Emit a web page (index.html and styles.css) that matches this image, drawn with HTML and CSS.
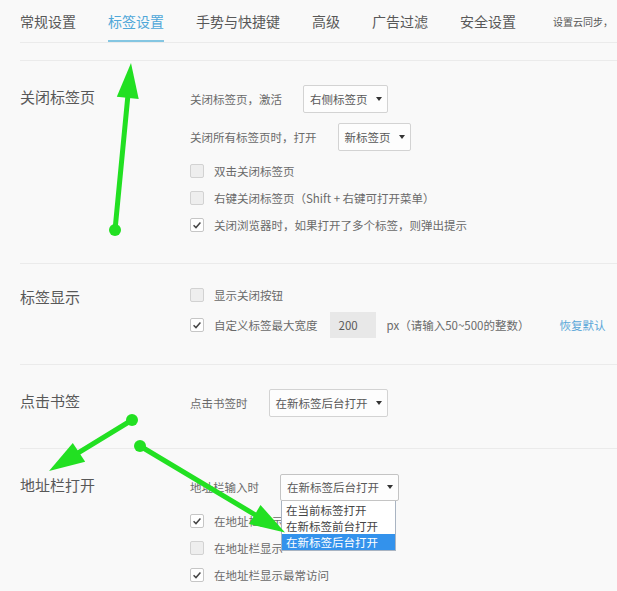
FILE: index.html
```html
<!DOCTYPE html>
<html lang="zh-CN">
<head>
<meta charset="utf-8">
<title>标签设置</title>
<link rel="stylesheet" href="styles.css">
</head>
<body>
<div class="page">
  <nav class="nav">
    <span class="tab">常规设置</span>
    <span class="tab active">标签设置</span>
    <span class="tab">手势与快捷键</span>
    <span class="tab">高级</span>
    <span class="tab">广告过滤</span>
    <span class="tab">安全设置</span>
    <span class="tab small">设置云同步，</span>
  </nav>

  <section class="section">
    <h2 class="title">关闭标签页</h2>
    <div class="rows">
      <div class="row sel-row"><span class="label">关闭标签页，激活</span><span class="select">右侧标签页<i class="caret"></i></span></div>
      <div class="row sel-row"><span class="label">关闭所有标签页时，打开</span><span class="select">新标签页<i class="caret"></i></span></div>
      <div class="row cb-row"><span class="cb"></span>双击关闭标签页</div>
      <div class="row cb-row"><span class="cb"></span>右键关闭标签页（Shift + 右键可打开菜单）</div>
      <div class="row cb-row"><span class="cb checked"><svg viewBox="0 0 14 14"><polyline points="3,7.2 5.8,10 11,4"/></svg></span>关闭浏览器时，如果打开了多个标签，则弹出提示</div>
    </div>
  </section>

  <section class="section compact">
    <h2 class="title">标签显示</h2>
    <div class="rows">
      <div class="row cb-row"><span class="cb"></span>显示关闭按钮</div>
      <div class="row input-row"><span class="cb checked"><svg viewBox="0 0 14 14"><polyline points="3,7.2 5.8,10 11,4"/></svg></span>自定义标签最大宽度<span class="num">200</span><span class="unit">px（请输入50~500的整数）</span><span class="link">恢复默认</span></div>
    </div>
  </section>

  <section class="section">
    <h2 class="title">点击书签</h2>
    <div class="rows">
      <div class="row sel-row"><span class="label">点击书签时</span><span class="select">在新标签后台打开<i class="caret"></i></span></div>
    </div>
  </section>

  <section class="section last">
    <h2 class="title">地址栏打开</h2>
    <div class="rows">
      <div class="row sel-row"><span class="label">地址栏输入时</span>
        <span class="select-wrap">
          <span class="select open">在新标签后台打开<i class="caret"></i></span>
          <span class="menu">
            <span class="opt">在当前标签打开</span>
            <span class="opt">在新标签前台打开</span>
            <span class="opt hl">在新标签后台打开</span>
          </span>
        </span>
      </div>
      <div class="row cb-row"><span class="cb checked"><svg viewBox="0 0 14 14"><polyline points="3,7.2 5.8,10 11,4"/></svg></span>在地址栏显示</div>
      <div class="row cb-row"><span class="cb"></span>在地址栏显示</div>
      <div class="row cb-row"><span class="cb checked"><svg viewBox="0 0 14 14"><polyline points="3,7.2 5.8,10 11,4"/></svg></span>在地址栏显示最常访问</div>
    </div>
  </section>
</div>

<svg class="annot" viewBox="0 0 617 591" width="617" height="591">
  <g class="arrow">
    <line x1="115" y1="230" x2="127.7" y2="97.8"/>
    <circle cx="115" cy="230" r="6"/>
    <polygon points="131,63 138.7,98.9 116.8,96.8"/>
  </g>
  <g class="arrow">
    <line x1="132" y1="420" x2="79" y2="452.3"/>
    <circle cx="132" cy="420" r="6"/>
    <polygon points="49,471 85.2,461.7 72.8,442.9"/>
  </g>
  <g class="arrow">
    <line x1="140" y1="446" x2="254.8" y2="514.6"/>
    <circle cx="140" cy="446" r="6"/>
    <polygon points="285,532.5 249.1,524.1 260.5,505"/>
  </g>
</svg>
</body>
</html>
```

FILE: styles.css
```css
html, body {
  margin: 0;
  padding: 0;
  height: 100%;
  overflow: hidden;
}

body {
  position: relative;
  background: #f9f9f9;
  font-family: "Noto Sans CJK SC", "Noto Sans", sans-serif;
  color: #6a6a6a;
}

.page {
  margin-left: 20px;
}

/* top tabs */
.nav {
  display: flex;
  align-items: stretch;
  gap: 32px;
  height: 42px;
  border-bottom: 1px solid #ebebeb;
  margin-bottom: 17px;
  overflow: hidden;
}

.tab {
  display: flex;
  align-items: center;
  font-size: 14px;
  color: #585858;
  white-space: nowrap;
}

.tab.active {
  color: #4fa7d8;
  box-shadow: inset 0 -2px 0 #84c6e2;
}

.tab.small {
  font-size: 10px;
  margin-left: 5px;
}

/* sections */
.section {
  display: flex;
  align-items: flex-start;
  border-top: 1px solid #ebebeb;
  padding: 24px 0 29px;
}

.section.compact {
  padding: 21px 0 26px;
}

.section.last {
  padding-bottom: 0;
}

.title {
  flex: 0 0 170px;
  margin: 0;
  font-size: 15px;
  font-weight: normal;
  line-height: 24px;
  color: #585858;
}

.rows {
  display: flex;
  flex-direction: column;
  gap: 8px;
  font-size: 11.5px;
}

.row {
  display: flex;
  align-items: center;
  white-space: nowrap;
}

.sel-row {
  height: 28px;
  margin-bottom: 2px;
}

.cb-row {
  height: 19px;
}

.input-row {
  height: 26px;
}

.label {
  margin-right: 21px;
}

/* select */
.select {
  box-sizing: border-box;
  display: inline-flex;
  align-items: center;
  gap: 8px;
  height: 28px;
  padding: 0 5px 0 6px;
  background: #fdfdfd;
  border: 1px solid #d3d3d3;
  border-radius: 2px;
  color: #585858;
}

.select.open {
  height: 27px;
  border-color: #c4c4c4;
}

.caret {
  width: 0;
  height: 0;
  border-left: 3.5px solid transparent;
  border-right: 3.5px solid transparent;
  border-top: 4px solid #333;
}

.select-wrap {
  position: relative;
  display: inline-flex;
}

.menu {
  position: absolute;
  top: 100%;
  left: 1px;
  width: 115px;
  box-sizing: border-box;
  display: flex;
  flex-direction: column;
  padding-top: 1px;
  background: #fff;
  border: 1px solid #a9b4c2;
  border-top: none;
  z-index: 2;
}

.opt {
  height: 16px;
  line-height: 16px;
  padding-left: 4px;
  color: #444;
}

.opt.hl {
  background: #3392ec;
  color: #fff;
}

/* checkbox */
.cb {
  box-sizing: border-box;
  width: 14px;
  height: 14px;
  margin-right: 10px;
  border: 1px solid #d2d2d2;
  border-radius: 2px;
  background: #eeeeee;
  display: inline-flex;
}

.cb.checked {
  background: #fff;
  border-color: #c6c6c6;
}

.cb svg {
  width: 12px;
  height: 12px;
}

.cb polyline {
  fill: none;
  stroke: #444;
  stroke-width: 1.7;
}

/* width input */
.num {
  box-sizing: border-box;
  width: 46px;
  height: 26px;
  margin: 0 11px 0 12px;
  padding-left: 9px;
  display: inline-flex;
  align-items: center;
  background: #e8e8e8;
  color: #585858;
}

.link {
  margin-left: 30px;
  color: #58a6d8;
}

/* annotation arrows */
.annot {
  position: absolute;
  top: 0;
  left: 0;
  pointer-events: none;
  z-index: 5;
}

.arrow line {
  stroke: #22e022;
  stroke-width: 5;
  stroke-linecap: round;
}

.arrow circle,
.arrow polygon {
  fill: #22e022;
}
```
